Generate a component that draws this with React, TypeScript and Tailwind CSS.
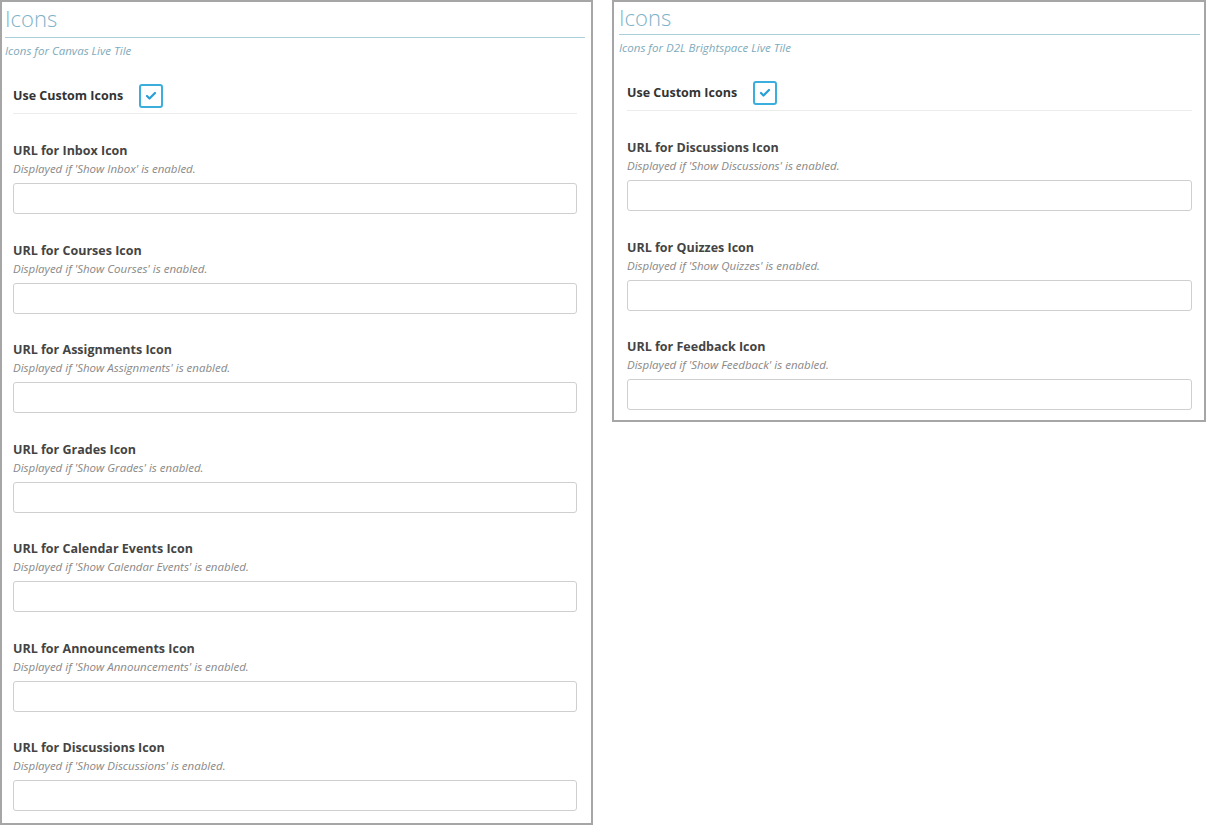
import { Check } from 'lucide-react';

interface Field {
  label: string;
  note: string;
}

const canvasFields: Field[] = [
  { label: 'URL for Inbox Icon', note: "Displayed if 'Show Inbox' is enabled." },
  { label: 'URL for Courses Icon', note: "Displayed if 'Show Courses' is enabled." },
  { label: 'URL for Assignments Icon', note: "Displayed if 'Show Assignments' is enabled." },
  { label: 'URL for Grades Icon', note: "Displayed if 'Show Grades' is enabled." },
  { label: 'URL for Calendar Events Icon', note: "Displayed if 'Show Calendar Events' is enabled." },
  { label: 'URL for Announcements Icon', note: "Displayed if 'Show Announcements' is enabled." },
  { label: 'URL for Discussions Icon', note: "Displayed if 'Show Discussions' is enabled." },
];

const d2lFields: Field[] = [
  { label: 'URL for Discussions Icon', note: "Displayed if 'Show Discussions' is enabled." },
  { label: 'URL for Quizzes Icon', note: "Displayed if 'Show Quizzes' is enabled." },
  { label: 'URL for Feedback Icon', note: "Displayed if 'Show Feedback' is enabled." },
];

function Panel({ subtitle, fields, wide }: { subtitle: string; fields: Field[]; wide?: boolean }) {
  return (
    <section
      className={
        wide
          ? 'w-[593px] border-2 border-[#a6a6a6] pl-[3px] pr-[6px] pb-[12px]'
          : 'w-[594px] border-2 border-[#a6a6a6] pl-[5px] pr-[4px] pb-[10px]'
      }
    >
      {/* 标题 */}
      <div
        className={
          wide
            ? 'h-[36px] border-b border-[#a9cfdb] text-[22px] leading-[32px] font-light text-[#7fb2c8]'
            : 'h-[33px] border-b border-[#a9cfdb] text-[22px] leading-[30px] font-light text-[#7fb2c8]'
        }
      >
        Icons
      </div>
      <div className="mt-[5px] text-[11.5px] leading-[16px] italic text-[#7eaabb]">{subtitle}</div>

      <div className="pl-[8px] pr-[8px]">
        <div className="mt-[25px] flex items-center gap-[16px] border-b border-[#ececec] pb-[5px]">
          <span className="text-[12.5px] font-bold text-[#333]">Use Custom Icons</span>
          <span className="flex h-[24px] w-[24px] items-center justify-center rounded-[3px] border-2 border-[#3aaedc] bg-white">
            <Check size={12} strokeWidth={4.5} className="text-[#2a9fd6]" />
          </span>
        </div>

        {fields.map((f, i) => (
          <div key={f.label} className={i === 0 ? 'mt-[28px]' : 'mt-[27.5px]'}>
            <div className="text-[12.5px] leading-[18px] font-bold text-[#444]">{f.label}</div>
            <div className="mt-[1px] text-[11.5px] leading-[16px] italic text-[#888]">{f.note}</div>
            <input
              type="text"
              className="mt-[6px] block h-[31px] w-full rounded-[3px] border border-[#cfcfcf] bg-white px-2 text-[13px] outline-none"
            />
          </div>
        ))}
      </div>
    </section>
  );
}

export default function App() {
  return (
    <div
      className="flex h-[827px] w-[1206px] items-start gap-[19px] bg-white"
      style={{ fontFamily: '"Open Sans", "Noto Sans", sans-serif' }}
    >
      <Panel wide subtitle="Icons for Canvas Live Tile" fields={canvasFields} />
      <Panel subtitle="Icons for D2L Brightspace Live Tile" fields={d2lFields} />
    </div>
  );
}
